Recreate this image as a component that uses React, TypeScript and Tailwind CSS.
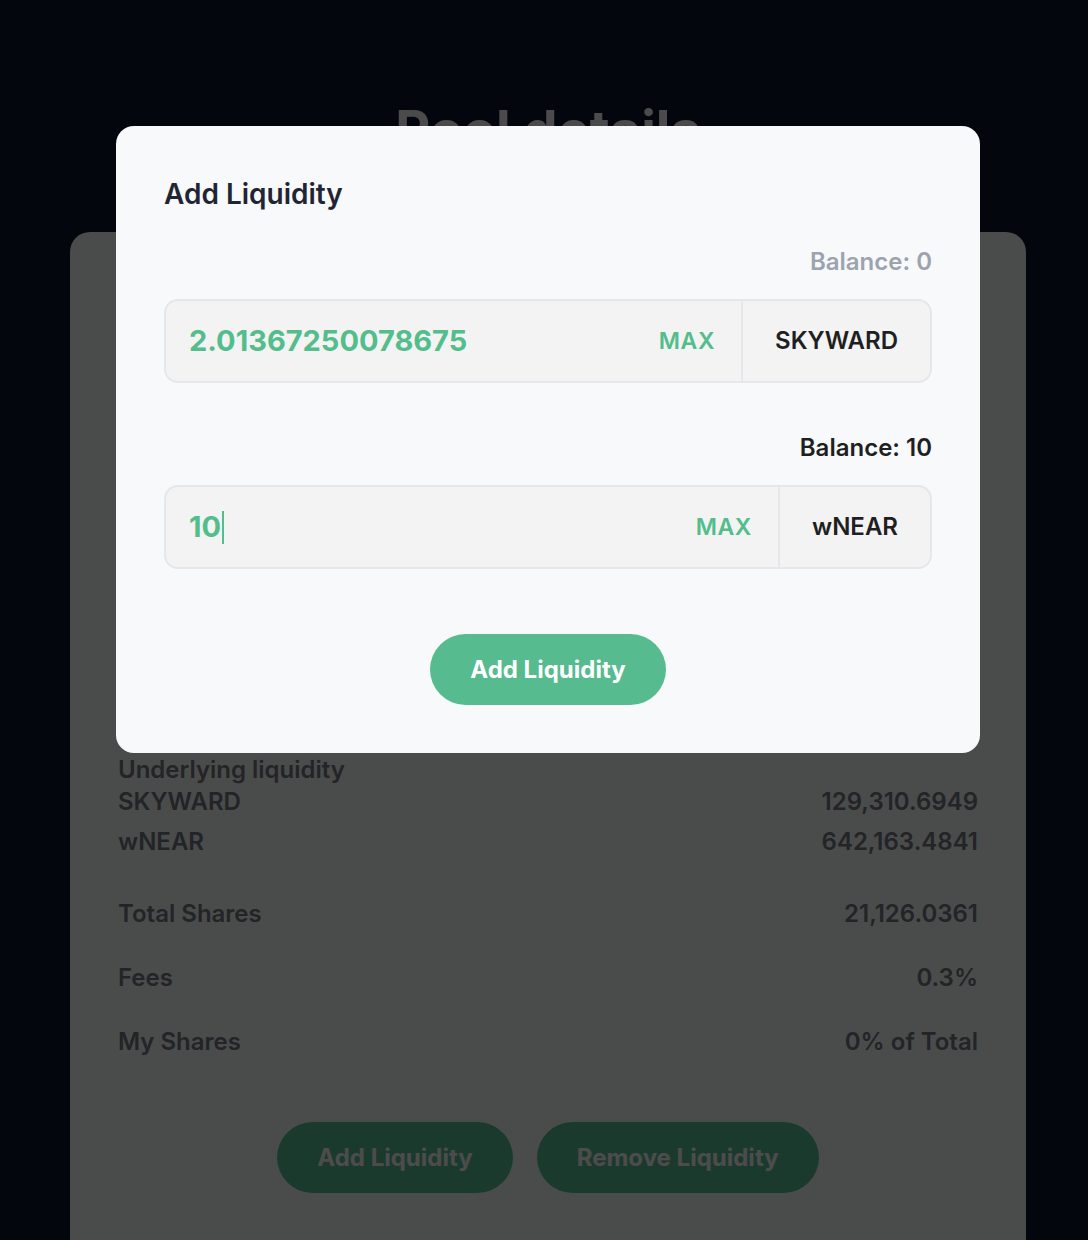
import React from "react";

const font = { fontFamily: "Inter, 'Noto Sans', sans-serif" };

interface RowProps {
  label: string;
  value: string;
  className?: string;
}

const StatRow: React.FC<RowProps> = ({ label, value, className = "" }) => (
  <div className={`flex items-center justify-between leading-8 ${className}`}>
    <span>{label}</span>
    <span>{value}</span>
  </div>
);

interface TokenInputProps {
  value: string;
  token: string;
  balance: string;
  muted?: boolean;
  caret?: boolean;
  className?: string;
}

const TokenInput: React.FC<TokenInputProps> = ({
  value,
  token,
  balance,
  muted,
  caret,
  className = "",
}) => (
  <div className={className}>
    <div
      className={`text-right text-[24px] font-semibold leading-7 ${
        muted ? "text-[#9ca3af]" : "text-[#1f1f1f]"
      }`}
    >
      Balance: {balance}
    </div>
    <div className="mt-[23px] flex h-[84px] items-stretch rounded-[14px] border-2 border-[#e6e7ea] bg-[#f3f3f3]">
      <div className="flex flex-1 items-center pl-[23px] pr-[26px]">
        <span className="text-[29px] font-bold text-[#53bd8c]">{value}</span>
        {caret && <span className="ml-[1px] h-[33px] w-[2px] bg-[#53bd8c]" />}
        <span className="ml-auto text-[23px] font-semibold tracking-wide text-[#53bd8c]">
          MAX
        </span>
      </div>
      <div className="flex items-center border-l-2 border-[#e6e7ea] px-[32px] text-[24px] font-semibold text-[#1f1f1f]">
        {token}
      </div>
    </div>
  </div>
);

export default function App() {
  return (
    <div className="min-h-[1240px] overflow-hidden bg-[#0a1428]" style={font}>
      {/* page behind the dialog */}
      <div className="flex flex-col items-center pl-[8px] pt-[103px]">
        <h1 className="text-[54px] font-bold leading-none text-[#fafafa]">Pool details</h1>
        <div className="mt-[75px] w-[956px] rounded-[20px] bg-[#f9fdfb] px-12 pb-24 pt-12 text-[24px] font-semibold text-[#767a84]">
          {/* pool header, covered by the dialog */}
          <div className="flex h-[474px] flex-col gap-6">
            <div className="flex items-center gap-4">
              <div className="h-16 w-16 rounded-full bg-[#d1d5db]" />
              <div className="h-16 w-16 rounded-full bg-[#d1d5db]" />
            </div>
          </div>
          <div className="leading-8">Underlying liquidity</div>
          <StatRow label="SKYWARD" value="129,310.6949" />
          <StatRow label="wNEAR" value="642,163.4841" className="mt-2" />
          <StatRow label="Total Shares" value="21,126.0361" className="mt-10" />
          <StatRow label="Fees" value="0.3%" className="mt-8" />
          <StatRow label="My Shares" value="0% of Total" className="mt-8" />
          <div className="mt-16 flex justify-center gap-6">
            <button className="h-[71px] rounded-full bg-[#5dc199] px-10 text-[24px] font-bold text-white">
              Add Liquidity
            </button>
            <button className="h-[71px] rounded-full bg-[#5dc199] px-10 text-[24px] font-bold text-white">
              Remove Liquidity
            </button>
          </div>
        </div>
      </div>

      {/* overlay + dialog */}
      <div className="fixed inset-0 flex justify-center bg-black/70 pl-[8px] pt-[126px]">
        <div className="h-fit w-[864px] rounded-[18px] bg-[#f8f9fb] px-12 pb-12 pt-12">
          <h2 className="text-[28px] font-semibold leading-10 text-[#1f2532]">Add Liquidity</h2>
          <TokenInput
            value="2.01367250078675"
            token="SKYWARD"
            balance="0"
            muted
            className="mt-[34px]"
          />
          <TokenInput value="10" token="wNEAR" balance="10" caret className="mt-[51px]" />
          <div className="mt-[65px] flex justify-center">
            <button className="h-[71px] w-[236px] rounded-full bg-[#56bb8e] text-[24px] font-bold text-white">
              Add Liquidity
            </button>
          </div>
        </div>
      </div>
    </div>
  );
}
